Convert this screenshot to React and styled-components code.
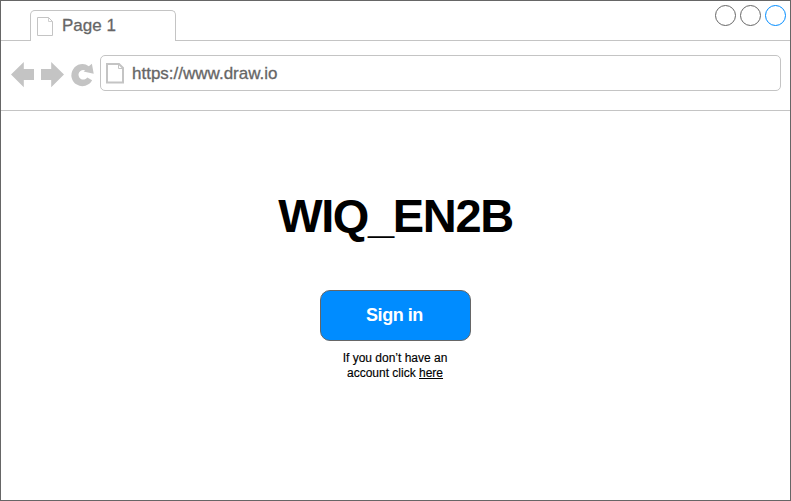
import React from "react";
import styled, { createGlobalStyle } from "styled-components";

const GlobalStyle = createGlobalStyle`
  * { box-sizing: border-box; }
  body { margin: 0; background: #fff; font-family: "Liberation Sans", Arial, Helvetica, sans-serif; }
`;

const BrowserWindow = styled.div`
  width: 791px;
  height: 501px;
  display: flex;
  flex-direction: column;
  border: 1px solid #666;
  background: #fff;
  overflow: hidden;
`;

const TabStrip = styled.header`
  height: 40px;
  flex: none;
  display: flex;
  align-items: flex-end;
`;

const StripLine = styled.div`
  width: ${(p) => p.$width || "auto"};
  flex: ${(p) => (p.$width ? "none" : 1)};
  height: 40px;
  border-bottom: 1px solid #c4c4c4;
`;

const Tab = styled.div`
  width: 146px;
  height: 31px;
  display: flex;
  align-items: flex-start;
  padding: 6px 0 0 6px;
  gap: 8px;
  border: 1px solid #c4c4c4;
  border-bottom: 0;
  border-radius: 5px 5px 0 0;
`;

const TabTitle = styled.span`
  color: #666;
  font-size: 17px;
  line-height: 20px;
  margin-top: -1px;
  -webkit-text-stroke: 0.3px #666;
`;

const WindowControls = styled(StripLine)`
  display: flex;
  justify-content: flex-end;
  gap: 4px;
  padding: 4px 4px 0 0;
`;

const Control = styled.span`
  width: 21px;
  height: 21px;
  border: 1px solid ${(p) => p.$color};
  border-radius: 50%;
`;

const Toolbar = styled.nav`
  height: 70px;
  flex: none;
  display: flex;
  align-items: flex-start;
  padding: 14px 9px 0;
  border-bottom: 1px solid #c4c4c4;
`;

const NavIcons = styled.svg`
  width: 90px;
  height: 36px;
  flex: none;
`;

const AddressBar = styled.div`
  flex: 1;
  height: 36px;
  display: flex;
  align-items: center;
  gap: 7px;
  padding-left: 5px;
  border: 1px solid #c4c4c4;
  border-radius: 5px;
`;

const Address = styled.span`
  color: #666;
  font-size: 17px;
  line-height: 20px;
  padding-top: 2px;
  -webkit-text-stroke: 0.3px #666;
`;

const Page = styled.main`
  flex: 1;
  display: flex;
  flex-direction: column;
  align-items: center;
  padding-top: 78px;
`;

const Title = styled.h1`
  margin: 0;
  color: #000;
  font-size: 47px;
  line-height: 54px;
  letter-spacing: -1.35px;
`;

const SignIn = styled.button`
  width: 151px;
  height: 51px;
  margin-top: 47px;
  padding: 0 2px 1px 0;
  border: 1px solid #666;
  border-radius: 10px;
  background: #008cff;
  color: #fff;
  font: bold 18px/20px "Liberation Sans", Arial, sans-serif;
  letter-spacing: -0.45px;
`;

const Hint = styled.p`
  display: flex;
  flex-direction: column;
  align-items: center;
  margin: 10px 1px 0 0;
  color: #000;
  font-size: 12px;
  line-height: 15px;
  -webkit-text-stroke: 0.15px #000;
`;

const HintLine = styled.span`
  display: flex;
  white-space: pre;
`;

const HintLink = styled.span`
  text-decoration: underline;
`;

const TabPageIcon = () => (
  <svg width="17" height="20" viewBox="0 0 17 20" fill="none" stroke="#c4c4c4">
    <path d="M.5 .5H11.5L15.5 4.5V18.5H.5Z" />
    <path d="M11.5 .5V4.5H15.5" strokeWidth=".8" />
  </svg>
);

const AddressPageIcon = () => (
  <svg width="19" height="21" viewBox="0 0 19 21" fill="none" stroke="#c4c4c4">
    <path d="M1 1H13L17 5V19.5H1Z" strokeWidth="2" />
    <path d="M12.5 1V5.5H17" />
  </svg>
);

export default function App() {
  return (
    <>
      <GlobalStyle />
      <BrowserWindow>
        <TabStrip>
          <StripLine $width="29px" />
          <Tab>
            <TabPageIcon />
            <TabTitle>Page 1</TabTitle>
          </Tab>
          <WindowControls>
            <Control $color="#666" />
            <Control $color="#666" />
            <Control $color="#008cff" />
          </WindowControls>
        </TabStrip>
        <Toolbar>
          <NavIcons viewBox="10 55 90 36" fill="#c4c4c4">
            <path d="M11 74.6L23.8 62V69H34V80H23.8V87.2Z" />
            <path d="M64 74.6L51.2 62V69H41V80H51.2V87.2Z" />
            <path d="M91.9 63.7L93.7 73.8L83.5 71.6L85.3 70.4A4.8 4.8 0 1 0 87.3 77.4L92.1 80.3A11 11 0 1 1 88.8 66.2Z" />
          </NavIcons>
          <AddressBar>
            <AddressPageIcon />
            <Address>https://www.draw.io</Address>
          </AddressBar>
        </Toolbar>
        <Page>
          <Title>WIQ_EN2B</Title>
          <SignIn>Sign in</SignIn>
          <Hint>
            <HintLine>If you don’t have an</HintLine>
            <HintLine>
              <span>account click </span>
              <HintLink>here</HintLink>
            </HintLine>
          </Hint>
        </Page>
      </BrowserWindow>
    </>
  );
}
